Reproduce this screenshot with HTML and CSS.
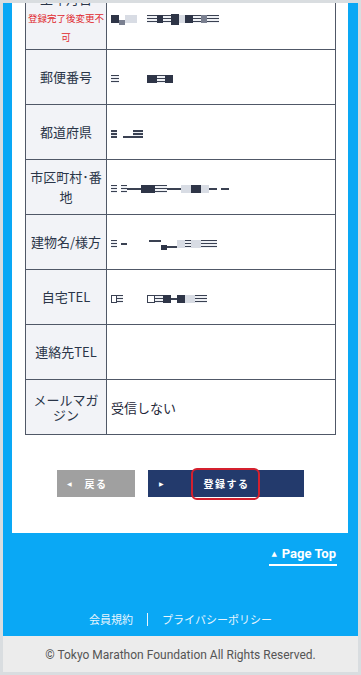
FILE: index.html
```html
<!DOCTYPE html>
<html lang="ja">
<head>
  <meta charset="UTF-8" />
  <meta name="viewport" content="width=device-width, initial-scale=1.0"/>
  <title>登録内容の確認</title>
  <link rel="stylesheet" href="styles.css">
</head>
<body>
  <div class="page">
    <div class="wrap">
      <main class="card">
        <table class="confirm">
          <colgroup><col class="col-label"><col></colgroup>
          <tr class="first">
            <th><span class="name">生年月日</span><span class="note">登録完了後変更不可</span></th>
            <td>
              <span class="mask"><i class="k w8"></i><i class="g w6 lo"></i><i class="p w12"></i><i class="gap w10"></i><i class="t w10"></i><i class="k w6"></i><i class="t w8"></i><i class="k w8 hi"></i><i class="p w6"></i><i class="k w8"></i><i class="t w8"></i><i class="g w6"></i><i class="t w12"></i></span>
            </td>
          </tr>
          <tr>
            <th>郵便番号</th>
            <td>
              <span class="mask"><i class="t w8"></i><i class="gap w28"></i><i class="k w10"></i><i class="t w8"></i><i class="k w8"></i></span>
            </td>
          </tr>
          <tr>
            <th>都道府県</th>
            <td>
              <span class="mask"><i class="t w6"></i><i class="gap w6"></i><i class="u w10"></i><i class="t w10"></i></span>
            </td>
          </tr>
          <tr>
            <th class="two">市区町村･番地</th>
            <td>
              <span class="mask"><i class="t w6"></i><i class="gap w4"></i><i class="t w6"></i><i class="u w14 mid"></i><i class="k w14"></i><i class="t w12"></i><i class="u w14 mid"></i><i class="p w10"></i><i class="k w10"></i><i class="p w8"></i><i class="u w8 mid"></i><i class="gap w4"></i><i class="u w8 mid"></i></span>
            </td>
          </tr>
          <tr>
            <th>建物名/様方</th>
            <td>
              <span class="mask"><i class="t w6"></i><i class="gap w4"></i><i class="u w6 mid"></i><i class="gap w22"></i><i class="u w12 top"></i><i class="k w6 lo"></i><i class="u w10"></i><i class="p w8"></i><i class="t w6"></i><i class="p w10"></i><i class="t w16"></i></span>
            </td>
          </tr>
          <tr>
            <th>自宅TEL</th>
            <td>
              <span class="mask"><i class="o w6"></i><i class="t w6"></i><i class="gap w24"></i><i class="o w8"></i><i class="t w8"></i><i class="k w8"></i><i class="u w6 mid"></i><i class="k w8"></i><i class="p w10"></i><i class="t w12"></i></span>
            </td>
          </tr>
          <tr>
            <th>連絡先TEL</th>
            <td></td>
          </tr>
          <tr>
            <th class="tight">メールマガジン</th>
            <td>受信しない</td>
          </tr>
        </table>

        <div class="actions">
          <button class="btn btn-back"><span class="arrow">◀</span><span class="label">戻る</span></button>
          <button class="btn btn-submit"><span class="arrow">▶</span><span class="label marked">登録する</span></button>
        </div>
      </main>
    </div>

    <footer class="footer">
      <div class="pagetop-wrap">
        <a class="pagetop" href="#"><span class="up">▲</span>Page Top</a>
      </div>
      <nav class="links">
        <a href="#">会員規約</a>
        <span class="sep"></span>
        <a href="#">プライバシーポリシー</a>
      </nav>
    </footer>
    <p class="copy">© Tokyo Marathon Foundation All Rights Reserved.</p>
  </div>
</body>
</html>
```

FILE: styles.css
```css
html, body {
    margin: 0;
    padding: 0;
}

body {
    height: 675px;
    box-sizing: border-box;
    border: 3px solid #d9dde0;
    background: #ececec;
    font-family: "Noto Sans CJK JP", "Noto Sans", sans-serif;
}

.page {
    height: 100%;
    overflow: hidden;
    background: #0aa8f5;
}

.wrap {
    padding: 0 10px 0 9px;
}

/* White card with the confirmation table */
.card {
    background: #fff;
    margin-top: -18px;
    padding: 0 12px 36px 13px;
}

.confirm {
    width: 100%;
    border-collapse: collapse;
    table-layout: fixed;
}

.col-label {
    width: 81px;
}

.confirm tr {
    height: 55px;
}

.confirm th,
.confirm td {
    border: 1px solid #505867;
}

.confirm th {
    background: #f2f3f7;
    color: #2a3548;
    font-weight: normal;
    font-size: 13px;
    line-height: 20px;
    padding: 0 2px;
    text-align: center;
}

.confirm th.tight {
    line-height: 15px;
}

.confirm td {
    padding: 0 4px;
    font-size: 13px;
    color: #1e2738;
}

.confirm tr.first {
    height: auto;
}

.confirm tr.first th {
    padding: 2px 1px;
}

.first .name {
    display: block;
    line-height: 21px;
}

.first .note {
    display: block;
    color: #e0282e;
    font-size: 9.5px;
    line-height: 19px;
}

/* Blurred personal data */
.mask {
    display: inline-flex;
    align-items: center;
    height: 12px;
    vertical-align: middle;
}

.mask i {
    display: block;
    height: 8px;
}

.mask .k { background: #2e3547; }
.mask .g { background: #7a8090; }
.mask .p { background: #d8dce4; }
.mask .t { background: repeating-linear-gradient(#3a4152 0 1.5px, #eef0f4 1.5px 3px); }
.mask .u { background: linear-gradient(transparent 6px, #3a4152 6px); }
.mask .u.mid { background: linear-gradient(transparent 3px, #3a4152 3px 5px, transparent 5px); }
.mask .u.top { background: linear-gradient(#3a4152 2px, transparent 2px); }
.mask .o { border: 1px solid #3a4152; box-sizing: border-box; }
.mask .lo { height: 5px; align-self: flex-end; }
.mask .hi { height: 11px; }
.mask .gap { background: transparent; }

.w4 { width: 4px; }
.w6 { width: 6px; }
.w8 { width: 8px; }
.w10 { width: 10px; }
.w12 { width: 12px; }
.w14 { width: 14px; }
.w16 { width: 16px; }
.w22 { width: 22px; }
.w24 { width: 24px; }
.w28 { width: 28px; }

/* Buttons */
.actions {
    display: flex;
    justify-content: center;
    gap: 13px;
    margin-top: 35px;
}

.btn {
    display: grid;
    grid-template-columns: 1fr auto 1fr;
    align-items: center;
    height: 27px;
    border: 0;
    padding: 0 10px;
    color: #fff;
    font-family: "Noto Sans CJK JP", sans-serif;
    font-weight: bold;
    font-size: 10px;
    letter-spacing: 1.5px;
}

.btn .arrow {
    justify-self: start;
    font-family: "DejaVu Sans", sans-serif;
    font-size: 6px;
    letter-spacing: 0;
}

.btn .label {
    line-height: 14px;
}

.btn-back {
    width: 78px;
    background: #a0a0a0;
}

.btn-submit {
    width: 156px;
    background: #233a6c;
    padding-left: 11px;
}

.marked {
    position: relative;
}

.marked::after {
    content: '';
    position: absolute;
    top: -9px;
    bottom: -9px;
    left: -13px;
    right: -10px;
    border: 2px solid #d4202e;
    border-radius: 6px;
}

/* Footer */
.footer {
    padding: 13px 0 9px;
}

.pagetop-wrap {
    display: flex;
    justify-content: flex-end;
    padding-right: 21px;
}

.pagetop {
    color: #fff;
    text-decoration: none;
    font-family: Roboto, sans-serif;
    font-weight: bold;
    font-size: 13px;
    line-height: 16px;
    padding: 0 1px 2px 2px;
    border-bottom: 2px solid #fff;
}

.pagetop .up {
    font-family: "DejaVu Sans", sans-serif;
    font-size: 7px;
    margin-right: 5px;
    vertical-align: 2px;
}

.links {
    display: flex;
    justify-content: center;
    align-items: center;
    margin-top: 45px;
    font-size: 11px;
    line-height: 16px;
}

.links a {
    color: #e8f5fd;
    text-decoration: none;
}

.sep {
    width: 1px;
    height: 13px;
    background: #e8f5fd;
    margin: 0 14px;
}

.copy {
    margin: 0;
    background: #ececec;
    color: #555;
    font-family: Roboto, sans-serif;
    font-size: 12px;
    line-height: 16px;
    padding: 11px 0 9px;
    text-align: center;
}
```
